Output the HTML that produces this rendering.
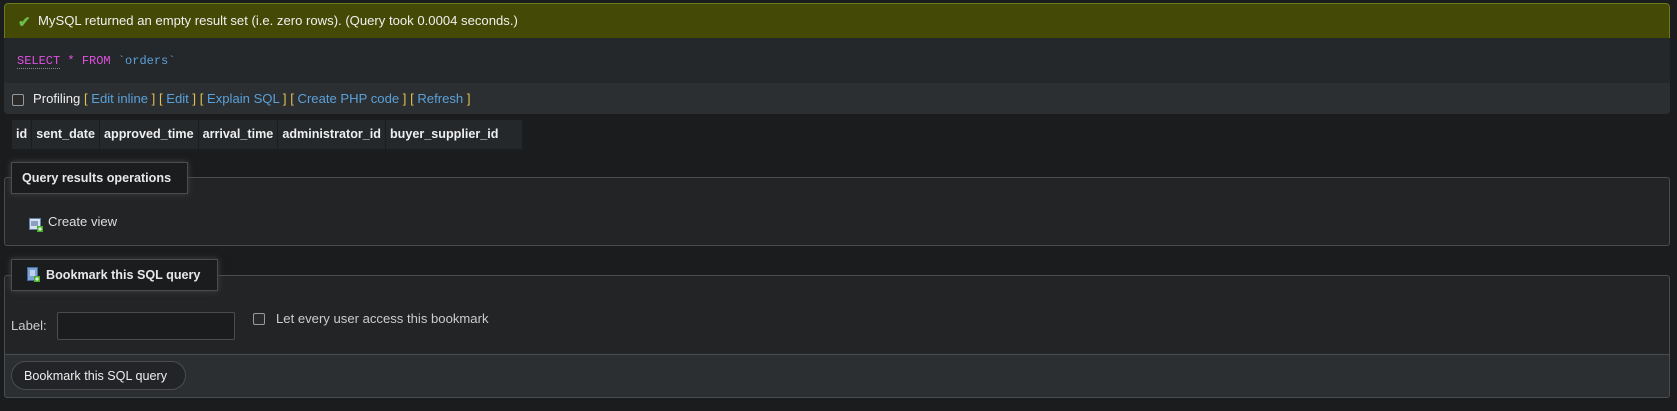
<!DOCTYPE html>
<html><head><style>
*{box-sizing:border-box;margin:0;padding:0}
body{width:1677px;height:411px;background:#1b1c1e;font-family:"Liberation Sans",sans-serif;font-size:13.1px;color:#e8e8e8;position:relative;overflow:hidden}
.abs{position:absolute;white-space:nowrap}
a{color:#5aa0d8;text-decoration:none}
.y{color:#e0c050}
</style></head><body>
<div class="abs" style="left:4px;top:3px;width:1666px;height:111px;border-radius:4px;overflow:hidden;background:#25282b">
 <div class="abs" style="left:0;top:0;width:1666px;height:35px;background:#444a05;border:1px solid #6b7a1a;border-bottom:none;border-radius:4px 4px 0 0"></div>
 <div class="abs" style="left:14px;top:10px;color:#6cc04a;font-size:15px;font-weight:bold">✔</div>
 <div class="abs" style="left:34px;top:10px;color:#f0f0f0">MySQL returned an empty result set (i.e. zero rows). (Query took 0.0004 seconds.)</div>
 <div class="abs" style="left:13px;top:51px;font-family:'Liberation Mono',monospace;font-size:12px"><span style="color:#e050e0;border-bottom:1px dotted #888">SELECT</span> <span style="color:#e050e0">*</span> <span style="color:#e050e0">FROM</span> <span style="color:#5aa0d8">`orders`</span></div>
 <div class="abs" style="left:0;top:80px;width:1666px;height:31px;background:#2c2f32"></div>
 <div class="abs" style="left:8px;top:91px;width:12px;height:12px;border:1px solid #999;border-radius:2px;background:#2a2a2a"></div>
 <div class="abs" style="left:29px;top:88px;color:#eee">Profiling <span class="y">[</span> <a>Edit inline</a> <span class="y">]</span> <span class="y">[</span> <a>Edit</a> <span class="y">]</span> <span class="y">[</span> <a>Explain SQL</a> <span class="y">]</span> <span class="y">[</span> <a>Create PHP code</a> <span class="y">]</span> <span class="y">[</span> <a>Refresh</a> <span class="y">]</span></div>
</div>
<div class="abs" style="left:12px;top:120px;height:29px;width:510px;background:#25282b;display:flex;font-weight:bold;color:#eee;font-size:12.6px">
 <div style="padding:7px 4px;border-right:1px solid #1b1c1e">id</div>
 <div style="padding:7px 4px;border-right:1px solid #1b1c1e">sent_date</div>
 <div style="padding:7px 4px;border-right:1px solid #1b1c1e">approved_time</div>
 <div style="padding:7px 4px;border-right:1px solid #1b1c1e">arrival_time</div>
 <div style="padding:7px 4px;border-right:1px solid #1b1c1e">administrator_id</div>
 <div style="padding:7px 4px">buyer_supplier_id</div>
</div>
<div class="abs" style="left:4px;top:177px;width:1666px;height:69px;background:#232426;border:1px solid #4a4c4f;border-radius:3px"></div>
<div class="abs" style="left:11px;top:162px;width:177px;height:32px;background:#1b1c1e;border:1px solid #4a4c4f;box-shadow:0 0 6px #444;font-weight:bold;padding:8px 10px;font-size:12.6px">Query results operations</div>
<svg class="abs" style="left:29px;top:218px" width="14" height="14"><rect x="0.5" y="0.5" width="11" height="11" fill="#d8e2ee" stroke="#5e7fa8"/><rect x="2" y="3" width="7" height="5" fill="#8aa0c0"/><rect x="8" y="8" width="6" height="6" fill="#4caf2a"/><path d="M11 9v4M9 11h4" stroke="#fff"/></svg>
<div class="abs" style="left:48px;top:214px;color:#ddd">Create view</div>
<div class="abs" style="left:4px;top:275px;width:1666px;height:123px;background:#232426;border:1px solid #4a4c4f;border-radius:3px;overflow:hidden">
 <div class="abs" style="left:0;top:78px;width:1666px;height:45px;background:#2c2f32;border-top:1px solid #4a4c4f"></div>
</div>
<div class="abs" style="left:11px;top:259px;width:207px;height:32px;background:#1b1c1e;border:1px solid #4a4c4f;box-shadow:0 0 6px #444;font-weight:bold;padding:8px 0 0 34px;font-size:12.6px">Bookmark this SQL query</div>
<svg class="abs" style="left:27px;top:267px" width="14" height="16"><rect x="0.5" y="0.5" width="10" height="13" fill="#7ea4d4" stroke="#3e6aa0"/><path d="M3 4h5M3 6h5M3 8h5" stroke="#fff"/><rect x="7" y="9" width="6" height="6" fill="#4caf2a"/><path d="M10 10v4M8 12h4" stroke="#fff"/></svg>
<div class="abs" style="left:11px;top:318px;color:#ccc">Label:</div>
<div class="abs" style="left:57px;top:312px;width:178px;height:28px;background:#1b1c1e;border:1px solid #4a4c4f;border-radius:2px"></div>
<div class="abs" style="left:253px;top:313px;width:12px;height:12px;border:1px solid #999;border-radius:2px;background:#2a2a2a"></div>
<div class="abs" style="left:276px;top:311px;color:#ccc">Let every user access this bookmark</div>
<div class="abs" style="left:11px;top:361px;width:175px;height:29px;border:1px solid #4a4c4f;border-radius:15px;background:#222427;padding:7px 0 0 12px;color:#eee;font-size:12.6px">Bookmark this SQL query</div>
</body></html>
